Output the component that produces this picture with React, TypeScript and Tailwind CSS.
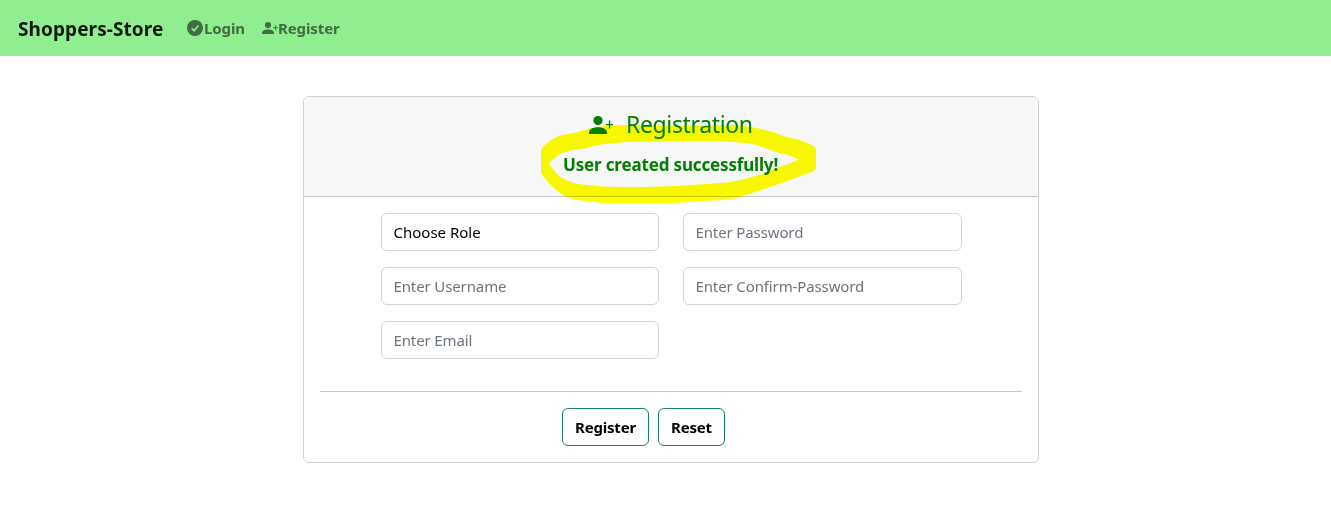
import type { ReactNode } from "react";

const fieldClass =
  "block h-[38px] w-full appearance-none rounded-md border border-[#ced4da] bg-white px-[11.5px] text-[15px]";

const inputClass =
  "pb-[1px] tracking-[-0.12px] placeholder:text-[#6c757d] placeholder:opacity-100";

const buttonClass =
  "h-[38px] rounded-md border border-[#198754] bg-white text-center text-[15px] font-bold tracking-[-0.2px] text-black";

function CheckCircle({ className }: { className: string }) {
  return (
    <svg className={className} viewBox="0 0 16 16" aria-hidden="true">
      <circle cx="8" cy="8" r="8" fill="currentColor" />
      <path d="M4.700 8.300L7.200 10.700L11.500 5.500" fill="none" stroke="#90ee90" strokeWidth="1.7" />
    </svg>
  );
}

function PersonPlus({ className }: { className: string }) {
  return (
    <svg className={className} viewBox="0 0 24 18" fill="currentColor" aria-hidden="true">
      <circle cx="9" cy="4.6" r="4.6" />
      <path d="M0 18v-1.200C0 13.500 3.600 11.300 9 11.300s9 2.200 9 5.500V18z" />
      <path d="M19.900 4.500h1.300v3.400h3v1.300h-3v3.400h-1.300V9.200h-3V7.900h3z" />
    </svg>
  );
}

function NavLink({ className, icon, children }: { className: string; icon: ReactNode; children: ReactNode }) {
  return (
    <a className={`flex items-center whitespace-nowrap text-[15px] font-bold tracking-[-0.1px] text-[#416b41] ${className}`}>
      {icon}
      <span>{children}</span>
    </a>
  );
}

function Highlight() {
  return (
    <svg
      className="pointer-events-none absolute left-[226px] top-[-7px] h-[120px] w-[300px] mix-blend-multiply"
      viewBox="0 0 900 360"
      fill="#ffff00"
      fillRule="evenodd"
      aria-hidden="true"
    >
      <path d="M33 178L53 158L68 147L93 136L148 125L180 115L218 109L278 105L430 107L600 105L640 107L698 118L735 128L768 140L810 151L838 161L852 169L858 177V236L846 246L818 256L780 270L738 285L678 305L618 325L580 329L518 333L438 339L400 341H260L218 339L168 333L135 329L113 322L95 313L78 300L53 275L33 250ZM56 220L75 203L93 190L125 181L168 175L190 168L218 163L288 156L430 154L538 153L600 155L658 160L690 169L728 183L765 193L808 208L780 220L738 235L705 249L668 260L640 268L598 277L560 280L498 284L438 288L350 291L228 290L180 286L148 283L120 275L103 268L90 260L78 248Z" />
    </svg>
  );
}

export default function App() {
  return (
    <div className="min-h-[513px] bg-white font-['Noto_Sans','Open_Sans',sans-serif] text-[#212529]">
      <nav className="flex h-14 items-center bg-[#90ee90] pl-[18px]">
        <a className="w-[169px] whitespace-nowrap pt-0.5 text-[19px] font-bold tracking-[0.09px] text-black/90">Shoppers-Store</a>
        <NavLink className="w-[75px]" icon={<CheckCircle className="mr-px size-4 shrink-0" />}>
          Login
        </NavLink>
        <NavLink className="" icon={<PersonPlus className="h-3 w-4 shrink-0" />}>
          Register
        </NavLink>
      </nav>

      <main className="ml-[303px] mt-10 h-[367px] w-[736px] rounded-md border border-[#d0d0d0] bg-white">
        <header className="relative h-[100px] rounded-t-[5px] border-b border-[#c8c8c8] bg-[#f7f7f7] pt-3 text-[#008000]">
          <h1 className="flex h-8 items-center pl-[285px] text-[23px] font-normal tracking-[-0.36px]">
            <PersonPlus className="mr-[13px] h-[18px] w-6 shrink-0" />
            <span className="pb-px">Registration</span>
          </h1>
          <p className="pl-[259px] pt-3 text-[17px] font-bold leading-6 tracking-[-0.16px]">User created successfully!</p>
          <Highlight />
        </header>

        <form className="pt-4">
          <div className="ml-[77px] grid w-[581px] grid-cols-[278px_279px] gap-x-6 gap-y-4">
            <select className={`${fieldClass} pt-[1px] text-black`} defaultValue="">
              <option value="">Choose Role</option>
            </select>
            <input className={`${fieldClass} ${inputClass}`} type="password" placeholder="Enter Password" />
            <input className={`${fieldClass} ${inputClass}`} placeholder="Enter Username" />
            <input className={`${fieldClass} ${inputClass}`} type="password" placeholder="Enter Confirm-Password" />
            <input className={`${fieldClass} ${inputClass}`} type="email" placeholder="Enter Email" />
          </div>
          <hr className="mx-4 mt-8 border-[#c8c9ca]" />
          <div className="ml-[258px] mt-4 flex gap-[9px]">
            <button type="button" className={`${buttonClass} w-[87px]`}>Register</button>
            <button type="reset" className={`${buttonClass} w-[67px]`}>Reset</button>
          </div>
        </form>
      </main>
    </div>
  );
}
